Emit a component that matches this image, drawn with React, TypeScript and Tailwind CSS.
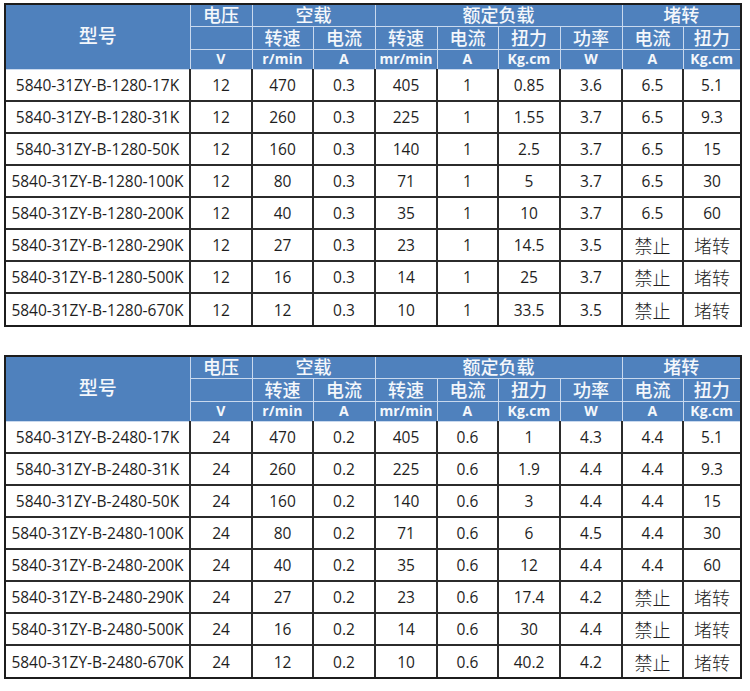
import React from "react";

type Row = string[];

const t1: Row[] = [
  ["5840-31ZY-B-1280-17K", "12", "470", "0.3", "405", "1", "0.85", "3.6", "6.5", "5.1"],
  ["5840-31ZY-B-1280-31K", "12", "260", "0.3", "225", "1", "1.55", "3.7", "6.5", "9.3"],
  ["5840-31ZY-B-1280-50K", "12", "160", "0.3", "140", "1", "2.5", "3.7", "6.5", "15"],
  ["5840-31ZY-B-1280-100K", "12", "80", "0.3", "71", "1", "5", "3.7", "6.5", "30"],
  ["5840-31ZY-B-1280-200K", "12", "40", "0.3", "35", "1", "10", "3.7", "6.5", "60"],
  ["5840-31ZY-B-1280-290K", "12", "27", "0.3", "23", "1", "14.5", "3.5", "禁止", "堵转"],
  ["5840-31ZY-B-1280-500K", "12", "16", "0.3", "14", "1", "25", "3.7", "禁止", "堵转"],
  ["5840-31ZY-B-1280-670K", "12", "12", "0.3", "10", "1", "33.5", "3.5", "禁止", "堵转"],
];

const t2: Row[] = [
  ["5840-31ZY-B-2480-17K", "24", "470", "0.2", "405", "0.6", "1", "4.3", "4.4", "5.1"],
  ["5840-31ZY-B-2480-31K", "24", "260", "0.2", "225", "0.6", "1.9", "4.4", "4.4", "9.3"],
  ["5840-31ZY-B-2480-50K", "24", "160", "0.2", "140", "0.6", "3", "4.4", "4.4", "15"],
  ["5840-31ZY-B-2480-100K", "24", "80", "0.2", "71", "0.6", "6", "4.5", "4.4", "30"],
  ["5840-31ZY-B-2480-200K", "24", "40", "0.2", "35", "0.6", "12", "4.4", "4.4", "60"],
  ["5840-31ZY-B-2480-290K", "24", "27", "0.2", "23", "0.6", "17.4", "4.2", "禁止", "堵转"],
  ["5840-31ZY-B-2480-500K", "24", "16", "0.2", "14", "0.6", "30", "4.4", "禁止", "堵转"],
  ["5840-31ZY-B-2480-670K", "24", "12", "0.2", "10", "0.6", "40.2", "4.2", "禁止", "堵转"],
];

const widths = [184, 62, 61, 62, 62, 61, 62, 62, 61, 57];

const hcn =
  "border border-[#c9d9ee] text-center text-[18px] leading-none font-medium text-[#f4f7fb] p-0";
const hunit =
  "border border-[#c9d9ee] text-center text-[14px] leading-none font-bold text-[#f4f7fb] p-0 tracking-[0.2px]";

function Spec({ rows }: { rows: Row[] }) {
  return (
    <div className="ml-[4px] w-[738px] border-2 border-[#1c1c1c] bg-white">
      <table
        className="table-fixed border-collapse border-hidden w-[734px]"
        style={{ fontFamily: '"Open Sans", "Noto Sans CJK SC", sans-serif' }}
      >
        <colgroup>
          {widths.map((w, i) => (
            <col key={i} style={{ width: w }} />
          ))}
        </colgroup>
        <thead className="bg-[#4f81bd]">
          <tr className="h-[21px]">
            <th rowSpan={3} className={hcn + " text-[19px]"}>
              型号
            </th>
            <th className={hcn}>电压</th>
            <th colSpan={2} className={hcn}>
              空载
            </th>
            <th colSpan={4} className={hcn}>
              额定负载
            </th>
            <th colSpan={2} className={hcn}>
              堵转
            </th>
          </tr>
          <tr className="h-[23px]">
            <th className={hcn}></th>
            <th className={hcn}>转速</th>
            <th className={hcn}>电流</th>
            <th className={hcn}>转速</th>
            <th className={hcn}>电流</th>
            <th className={hcn}>扭力</th>
            <th className={hcn}>功率</th>
            <th className={hcn}>电流</th>
            <th className={hcn}>扭力</th>
          </tr>
          <tr className="h-[20px]">
            <th className={hunit}>V</th>
            <th className={hunit}>r/min</th>
            <th className={hunit}>A</th>
            <th className={hunit + " tracking-normal text-[13.5px]"}>mr/min</th>
            <th className={hunit}>A</th>
            <th className={hunit}>Kg.cm</th>
            <th className={hunit}>W</th>
            <th className={hunit}>A</th>
            <th className={hunit}>Kg.cm</th>
          </tr>
        </thead>
        <tbody>
          {rows.map((r, i) => (
            <tr key={i} className="h-[32px]">
              {r.map((c, j) => {
                const cn = /[\u4e00-\u9fff]/.test(c);
                return (
                  <td
                    key={j}
                    className={
                      "border-2 border-[#2b2b2b] text-center p-0 pt-[2px] leading-none text-[#1e1e1e] " +
                      (cn ? "text-[18px] font-light" : "text-[15.5px]") +
                      (i === 0 ? " border-t-0" : "")
                    }
                  >
                    {c}
                  </td>
                );
              })}
            </tr>
          ))}
        </tbody>
      </table>
    </div>
  );
}

export default function App() {
  return (
    <div className="w-[750px] h-[691px] bg-white pt-[3px]">
      <Spec rows={t1} />
      <div className="h-[28px]" />
      <Spec rows={t2} />
    </div>
  );
}
